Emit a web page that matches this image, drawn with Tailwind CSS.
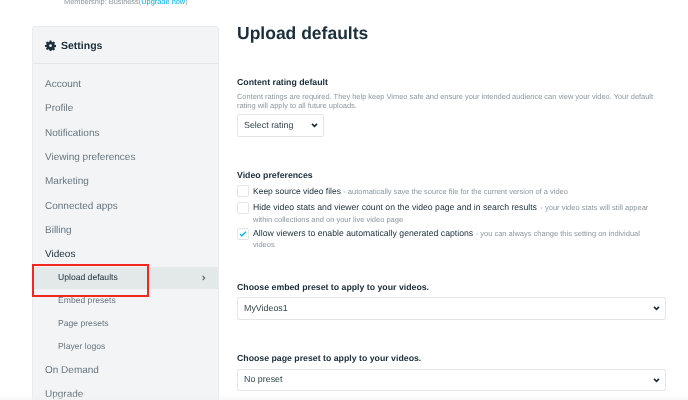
<!DOCTYPE html>
<html><head><meta charset="utf-8"><script src="https://cdn.jsdelivr.net/npm/@tailwindcss/browser@4"></script></head>
<body class="bg-white">
<div class="relative w-[688px] h-[400px] overflow-hidden bg-white font-['Liberation_Sans',sans-serif] text-[#1a2e3b] [text-rendering:geometricPrecision] blur-[0.3px]">
  <p class="absolute left-[64px] top-[-3px] text-[7.4px] leading-[10px] text-[#8b979f]">Membership: Business(<span class="text-[#00adef]">Upgrade now</span>)</p>
  <div class="flex pt-[26px] pl-[32px] gap-[18px]">
    <aside class="w-[187px] h-[400px] shrink-0 bg-[#f3f4f6] border border-[#e9ecee] rounded-[3px]">
      <div class="h-[37px] border-b border-[#e3e6e8] flex items-center pl-[12px] pt-[1px] gap-[5px]">
        <svg viewBox="0 0 24 24" class="w-[11px] h-[11px]" fill="#1a2e3b"><path fill-rule="evenodd" d="M10 1h4l.6 3.2 1.9.8 2.7-1.9 2.8 2.8-1.9 2.7.8 1.9L24 11v4l-3.1.6-.8 1.9 1.9 2.7-2.8 2.8-2.7-1.9-1.9.8L14 24h-4l-.6-3.1-1.9-.8-2.7 1.9-2.8-2.8 1.9-2.7-.8-1.9L0 15v-4l3.1-.5.8-1.9L2 5.9l2.8-2.8 2.7 1.9 1.9-.8zM12 9.5a3 3 0 1 0 0 6 3 3 0 0 0 0-6z"/></svg>
        <span class="text-[10.5px] leading-[12px] font-bold relative top-[0.5px]">Settings</span>
      </div>
      <nav class="pt-[8.5px] text-[#667780] text-[10px]">
        <a class="flex items-center h-[24.3px] pl-[12px]">Account</a>
        <a class="flex items-center h-[24.3px] pl-[12px]">Profile</a>
        <a class="flex items-center h-[24.3px] pl-[12px]">Notifications</a>
        <a class="flex items-center h-[24.3px] pl-[12px]">Viewing preferences</a>
        <a class="flex items-center h-[24.3px] pl-[12px]">Marketing</a>
        <a class="flex items-center h-[24.3px] pl-[12px]">Connected apps</a>
        <a class="flex items-center h-[24.3px] pl-[12px]">Billing</a>
        <a class="flex items-center h-[24px] pl-[12px] text-[#1a2e3b]">Videos</a>
        <a class="flex items-center justify-between h-[22px] pl-[25px] pr-[12px] bg-[#e3e8e8] text-[#1a2e3b] text-[8.6px]">Upload defaults
          <svg viewBox="0 0 6 8" class="w-[4px] h-[6px]" fill="none" stroke="#56666f" stroke-width="1.6"><path d="M1 1l3 3-3 3"/></svg>
        </a>
        <div class="text-[8.6px] pt-[0.5px]">
          <a class="flex items-center h-[23px] pl-[25px]">Embed presets</a>
          <a class="flex items-center h-[23px] pl-[25px]">Page presets</a>
          <a class="flex items-center h-[23px] pl-[25px]">Player logos</a>
        </div>
        <a class="flex items-center h-[24.3px] pl-[12px]">On Demand</a>
        <a class="flex items-center h-[24.3px] pl-[12px]">Upgrade</a>
      </nav>
    </aside>
    <main class="w-[429px] shrink-0">
      <h1 class="text-[17.5px] leading-[24px] mt-[-5px] font-bold">Upload defaults</h1>
      <section class="mt-[31px]">
        <h2 class="text-[8.75px] leading-[12px] font-bold">Content rating default</h2>
        <p class="mt-[3.5px] text-[7.45px] leading-[9px] text-[#8b979f]">Content ratings are required. They help keep Vimeo safe and ensure your intended audience can view your video. Your default rating will apply to all future uploads.</p>
        <div class="mt-[4.5px] w-[87px] h-[23px] border border-[#e3e6e8] rounded-[2px] flex items-center justify-between pl-[6px] pr-[5px] text-[8.9px] text-[#33454f]">Select rating
          <svg viewBox="0 0 8 6" class="w-[7px] h-[5px]" fill="none" stroke="#1a2e3b" stroke-width="1.9"><path d="M1 1l3 3 3-3"/></svg>
        </div>
      </section>
      <section class="mt-[32px]">
        <h2 class="text-[8.75px] leading-[12px] font-bold">Video preferences</h2>
        <div class="mt-[4px] flex gap-[4px] h-[12px]">
          <span class="w-[12px] h-[12px] shrink-0 border-[1.5px] border-[#e3e6e8] rounded-[2px]"></span>
          <p class="text-[8.5px] leading-[12px]">Keep source video files <span class="text-[7.5px] text-[#8b979f]">- automatically save the source file for the current version of a video</span></p>
        </div>
        <div class="mt-[5px] flex gap-[4px] h-[21px]">
          <span class="w-[12px] h-[12px] shrink-0 border-[1.5px] border-[#e3e6e8] rounded-[2px]"></span>
          <p class="text-[8.7px] leading-[10.5px]">Hide video stats and viewer count on the video page and in search results <span class="text-[7.5px] text-[#8b979f] ml-[1px]">- your video stats will still appear<br>within collections and on your live video page</span></p>
        </div>
        <div class="mt-[5px] flex gap-[4px] h-[21px]">
          <span class="w-[12px] h-[12px] shrink-0 border-[1.5px] border-[#e3e6e8] rounded-[2px] flex items-center justify-center">
            <svg viewBox="0 0 10 8" class="w-[8px] h-[6px]" fill="none" stroke="#00adef" stroke-width="1.8"><path d="M1 4l2.5 2.5L9 1"/></svg>
          </span>
          <p class="text-[8.7px] leading-[11px]">Allow viewers to enable automatically generated captions <span class="text-[7.5px] text-[#8b979f]">- you can always change this setting on individual<br>videos</span></p>
        </div>
      </section>
      <section class="mt-[32px]">
        <h2 class="text-[8.75px] leading-[12px] font-bold">Choose embed preset to apply to your videos.</h2>
        <div class="mt-[4px] h-[23px] border-[1.5px] border-[#e3e6e8] rounded-[2px] flex items-center justify-between pl-[6px] pr-[5px] text-[8.9px] text-[#33454f]">MyVideos1
          <svg viewBox="0 0 8 6" class="w-[7px] h-[5px]" fill="none" stroke="#1a2e3b" stroke-width="1.9"><path d="M1 1l3 3 3-3"/></svg>
        </div>
      </section>
      <section class="mt-[32px]">
        <h2 class="text-[8.75px] leading-[12px] font-bold">Choose page preset to apply to your videos.</h2>
        <div class="mt-[5px] h-[22px] border-[1.5px] border-[#e3e6e8] rounded-[2px] flex items-center justify-between pl-[6px] pr-[5px] text-[8.9px] text-[#33454f]">No preset
          <svg viewBox="0 0 8 6" class="w-[7px] h-[5px]" fill="none" stroke="#1a2e3b" stroke-width="1.9"><path d="M1 1l3 3 3-3"/></svg>
        </div>
      </section>
    </main>
  </div>
  <div class="absolute left-[32px] top-[264px] w-[117px] h-[33px] border-2 border-[#f0281e]"></div>
  <div class="absolute left-0 right-0 bottom-0 h-[6px] bg-gradient-to-b from-white/0 to-[#f0f0f0]/50"></div>
</div>
</body></html>
